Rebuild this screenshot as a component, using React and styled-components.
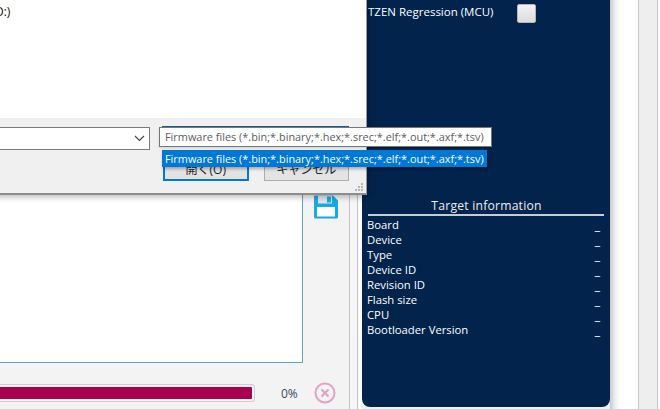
import React from "react";
import styled, { createGlobalStyle } from "styled-components";

const GlobalStyle = createGlobalStyle`
  html, body {
    margin: 0;
    padding: 0;
    overflow: hidden;
    background: #f0f0f0;
  }
`;

const uiFont = `"Open Sans", "Noto Sans CJK JP", sans-serif`;

const targetRows = [
  "Board",
  "Device",
  "Type",
  "Device ID",
  "Revision ID",
  "Flash size",
  "CPU",
  "Bootloader Version",
];

const Page = styled.div`
  position: relative;
  display: flex;
  width: 660px;
  height: 409px;
  overflow: hidden;
  font-family: ${uiFont};
`;

const MainPane = styled.div`
  width: 349px;
  height: 409px;
  box-sizing: border-box;
  flex-shrink: 0;
  display: flex;
  flex-direction: column;
  background: #f3f3f3;
`;

const WorkRow = styled.div`
  height: 363px;
  flex-shrink: 0;
  display: flex;
`;

const LogBox = styled.div`
  width: 303px;
  height: 100%;
  box-sizing: border-box;
  background: #fff;
  border-right: 1px solid #5aa5d6;
  border-bottom: 1px solid #5aa5d6;
`;

const ToolColumn = styled.div`
  flex: 1;
  display: flex;
  flex-direction: column;
  align-items: center;
  padding-top: 194px;
`;

const ProgressRow = styled.div`
  display: flex;
  align-items: center;
  margin-top: 21px;
  height: 18px;
`;

const ProgressTrack = styled.div`
  width: 255px;
  height: 18px;
  box-sizing: border-box;
  flex-shrink: 0;
  background: #f3f3f3;
  border: 1px solid #cfcfcf;
  border-left: none;
  border-radius: 0 3px 3px 0;
  padding: 2px 2px 2px 0;
`;

const ProgressFill = styled.div`
  height: 100%;
  background: #a8004f;
  border-radius: 0 1px 1px 0;
`;

const Percent = styled.span`
  font-size: 12px;
  color: #33485f;
  margin-left: 26px;
  width: 17px;
  white-space: nowrap;
`;

const CancelIcon = styled.svg`
  width: 22px;
  height: 22px;
  margin-left: 16px;
  flex-shrink: 0;
`;

const Gutter = styled.div`
  width: 13px;
  flex-shrink: 0;
  box-sizing: border-box;
  background: linear-gradient(to right, #f6f6f6 0 7px, #c4c4c4 7px 8px, #fbfbfb 8px);
  border-left: 1px solid #c4c4c4;
`;

const TargetPanel = styled.aside`
  width: 248px;
  height: 407px;
  flex-shrink: 0;
  box-sizing: border-box;
  background: #02234b;
  border-radius: 0 0 8px 8px;
  color: #fff;
  display: flex;
  flex-direction: column;
  padding: 4px 6px 0 5px;
`;

const OptionRow = styled.div`
  display: flex;
  align-items: flex-start;
  height: 193px;
  flex-shrink: 0;
`;

const OptionLabel = styled.span`
  width: 149px;
  font-size: 11.5px;
  line-height: 16px;
  padding-left: 1px;
  white-space: nowrap;
`;

const CheckBox = styled.div`
  width: 19px;
  height: 19px;
  box-sizing: border-box;
  background: linear-gradient(#f2f2f2, #dcdcdc);
  border: 1px solid #b5b5b5;
  border-radius: 2px;
`;

const InfoTitle = styled.div`
  font-size: 12.2px;
  line-height: 17px;
  text-align: center;
  letter-spacing: 0.2px;
  padding-left: 1px;
  color: #e8edf3;
  border-bottom: 2px solid #c9cbd2;
  margin-left: 1px;
  margin-bottom: 1px;
`;

const InfoRow = styled.div`
  display: flex;
  justify-content: space-between;
  height: 15px;
  font-size: 11.3px;
  line-height: 15px;
  padding-right: 4px;
`;

const InfoValue = styled.span`
  position: relative;
  top: 1px;
  font-size: 12px;
`;

const SideStrip = styled.div`
  flex: 1;
  display: flex;
  background: #fff;
`;

const ShadowEdge = styled.div`
  width: 28px;
  background: linear-gradient(to right, #c8c8c8, #eeeeee 5px, #fff 10px);
  border-right: 1px solid #c6c6c6;
`;

const SideColumn = styled.div`
  width: 18px;
  background: #eeeeee;
  border-right: 1px solid #c6c6c6;
`;

const Dialog = styled.div`
  position: absolute;
  left: -120px;
  top: -20px;
  width: 487px;
  height: 215px;
  display: flex;
  flex-direction: column;
  box-sizing: border-box;
  border-right: 1px solid #9a9a9a;
  border-bottom: 2px solid #8c8c8c;
  box-shadow: 1px 2px 6px rgba(0, 0, 0, 0.28);
  background: #fff;
`;

const DialogBody = styled.div`
  height: 138px;
  flex-shrink: 0;
  padding: 24px 0 0 115px;
  box-sizing: border-box;
  background: #fff;
  font-size: 12px;
  line-height: 16px;
  color: #111;
`;

const DialogFooter = styled.div`
  flex: 1;
  position: relative;
  background: #f0f0f0;
  display: grid;
  grid-template-columns: 270px 190px;
  grid-template-rows: 23px 1fr;
  column-gap: 9px;
  padding-top: 9px;
`;

const FileInput = styled.div`
  height: 23px;
  box-sizing: border-box;
  background: #fff;
  border: 1px solid #7a7a7a;
  display: flex;
  align-items: center;
  justify-content: flex-end;
  padding-right: 4px;
`;

const FilterBox = styled.div`
  height: 19px;
  margin: -1px 0 0 3px;
  box-sizing: border-box;
  border-top: 1px solid #0b5da8;
`;

const ButtonRow = styled.div`
  grid-column: 2;
  display: flex;
  gap: 15px;
  padding-left: 4px;
  margin-top: 8px;
`;

const DialogButton = styled.button`
  width: 86px;
  height: 23px;
  padding: 0;
  box-sizing: border-box;
  font-family: ${uiFont};
  font-size: 12px;
  line-height: 19px;
  color: #222;
  background: #e3e3e3;
  border: ${(p) => (p.$primary ? "2px solid #0078d7" : "1px solid #adadad")};
`;

const ResizeGrip = styled.svg`
  position: absolute;
  right: 2px;
  bottom: 1px;
  width: 9px;
  height: 9px;
`;

const FilterText = styled.div`
  position: absolute;
  left: 279px;
  top: 9px;
  width: 333px;
  height: 20px;
  box-sizing: border-box;
  border: 1px solid #767676;
  background: #fff;
  color: #5c5c5c;
  font-size: 10.9px;
  line-height: 17px;
  padding-left: 5px;
  white-space: nowrap;
  box-shadow: 0 1px 2px rgba(0, 0, 0, 0.12);
`;

const FilterOption = styled.div`
  position: absolute;
  left: 282px;
  top: 32px;
  width: 325px;
  height: 17px;
  background: #0078d7;
  color: #fff;
  font-size: 10.9px;
  line-height: 17px;
  padding-left: 3px;
  box-sizing: border-box;
  white-space: nowrap;
  box-shadow: 1px 2px 3px rgba(0, 0, 0, 0.3);
`;

const filterLabel = "Firmware files (*.bin;*.binary;*.hex;*.srec;*.elf;*.out;*.axf;*.tsv)";

const SaveIcon = () => (
  <svg width="26" height="26" viewBox="0 0 26 26" fill="none">
    <path
      d="M2 1.5H20L25 6.5V23a1.5 1.5 0 0 1-1.5 1.5H2.5A1.5 1.5 0 0 1 1 23V2.5A1 1 0 0 1 2 1.5Z"
      fill="#16a9e3"
    />
    <rect x="5" y="1.5" width="14" height="8" fill="#dfe6ea" />
    <rect x="14" y="2.5" width="4" height="6" fill="#16a9e3" />
    <rect x="4" y="13" width="18" height="9.5" fill="#fff" />
  </svg>
);

const App = () => {
  return (
    <>
      <GlobalStyle />
      <Page>
        <MainPane>
          <WorkRow>
            <LogBox />
            <ToolColumn>
              <SaveIcon />
            </ToolColumn>
          </WorkRow>
          <ProgressRow>
            <ProgressTrack>
              <ProgressFill />
            </ProgressTrack>
            <Percent>0%</Percent>
            <CancelIcon viewBox="0 0 22 22" fill="none">
              <circle cx="11" cy="11" r="9.5" stroke="#e2a3c3" strokeWidth="2" />
              <path d="M7.5 7.5l7 7M14.5 7.5l-7 7" stroke="#e2a3c3" strokeWidth="2.2" />
            </CancelIcon>
          </ProgressRow>
        </MainPane>
        <Gutter />
        <TargetPanel>
          <OptionRow>
            <OptionLabel>TZEN Regression (MCU)</OptionLabel>
            <CheckBox />
          </OptionRow>
          <InfoTitle>Target information</InfoTitle>
          {targetRows.map((row) => (
            <InfoRow key={row}>
              <span>{row}</span>
              <InfoValue>_</InfoValue>
            </InfoRow>
          ))}
        </TargetPanel>
        <SideStrip>
          <ShadowEdge />
          <SideColumn />
        </SideStrip>
        <Dialog>
          <DialogBody>D:)</DialogBody>
          <DialogFooter>
            <FileInput>
              <svg width="11" height="7" viewBox="0 0 11 7" fill="none">
                <path d="M1 1l4.5 4.5L10 1" stroke="#444" strokeWidth="1.1" />
              </svg>
            </FileInput>
            <FilterBox />
            <ButtonRow>
              <DialogButton $primary>開く(O)</DialogButton>
              <DialogButton>キャンセル</DialogButton>
            </ButtonRow>
            <ResizeGrip viewBox="0 0 9 9" fill="#b5b5b5">
              <rect x="6" y="0" width="2" height="2" />
              <rect x="3" y="3" width="2" height="2" />
              <rect x="6" y="3" width="2" height="2" />
              <rect x="0" y="6" width="2" height="2" />
              <rect x="3" y="6" width="2" height="2" />
              <rect x="6" y="6" width="2" height="2" />
            </ResizeGrip>
            <FilterText>{filterLabel}</FilterText>
            <FilterOption>{filterLabel}</FilterOption>
          </DialogFooter>
        </Dialog>
      </Page>
    </>
  );
};

export default App;
